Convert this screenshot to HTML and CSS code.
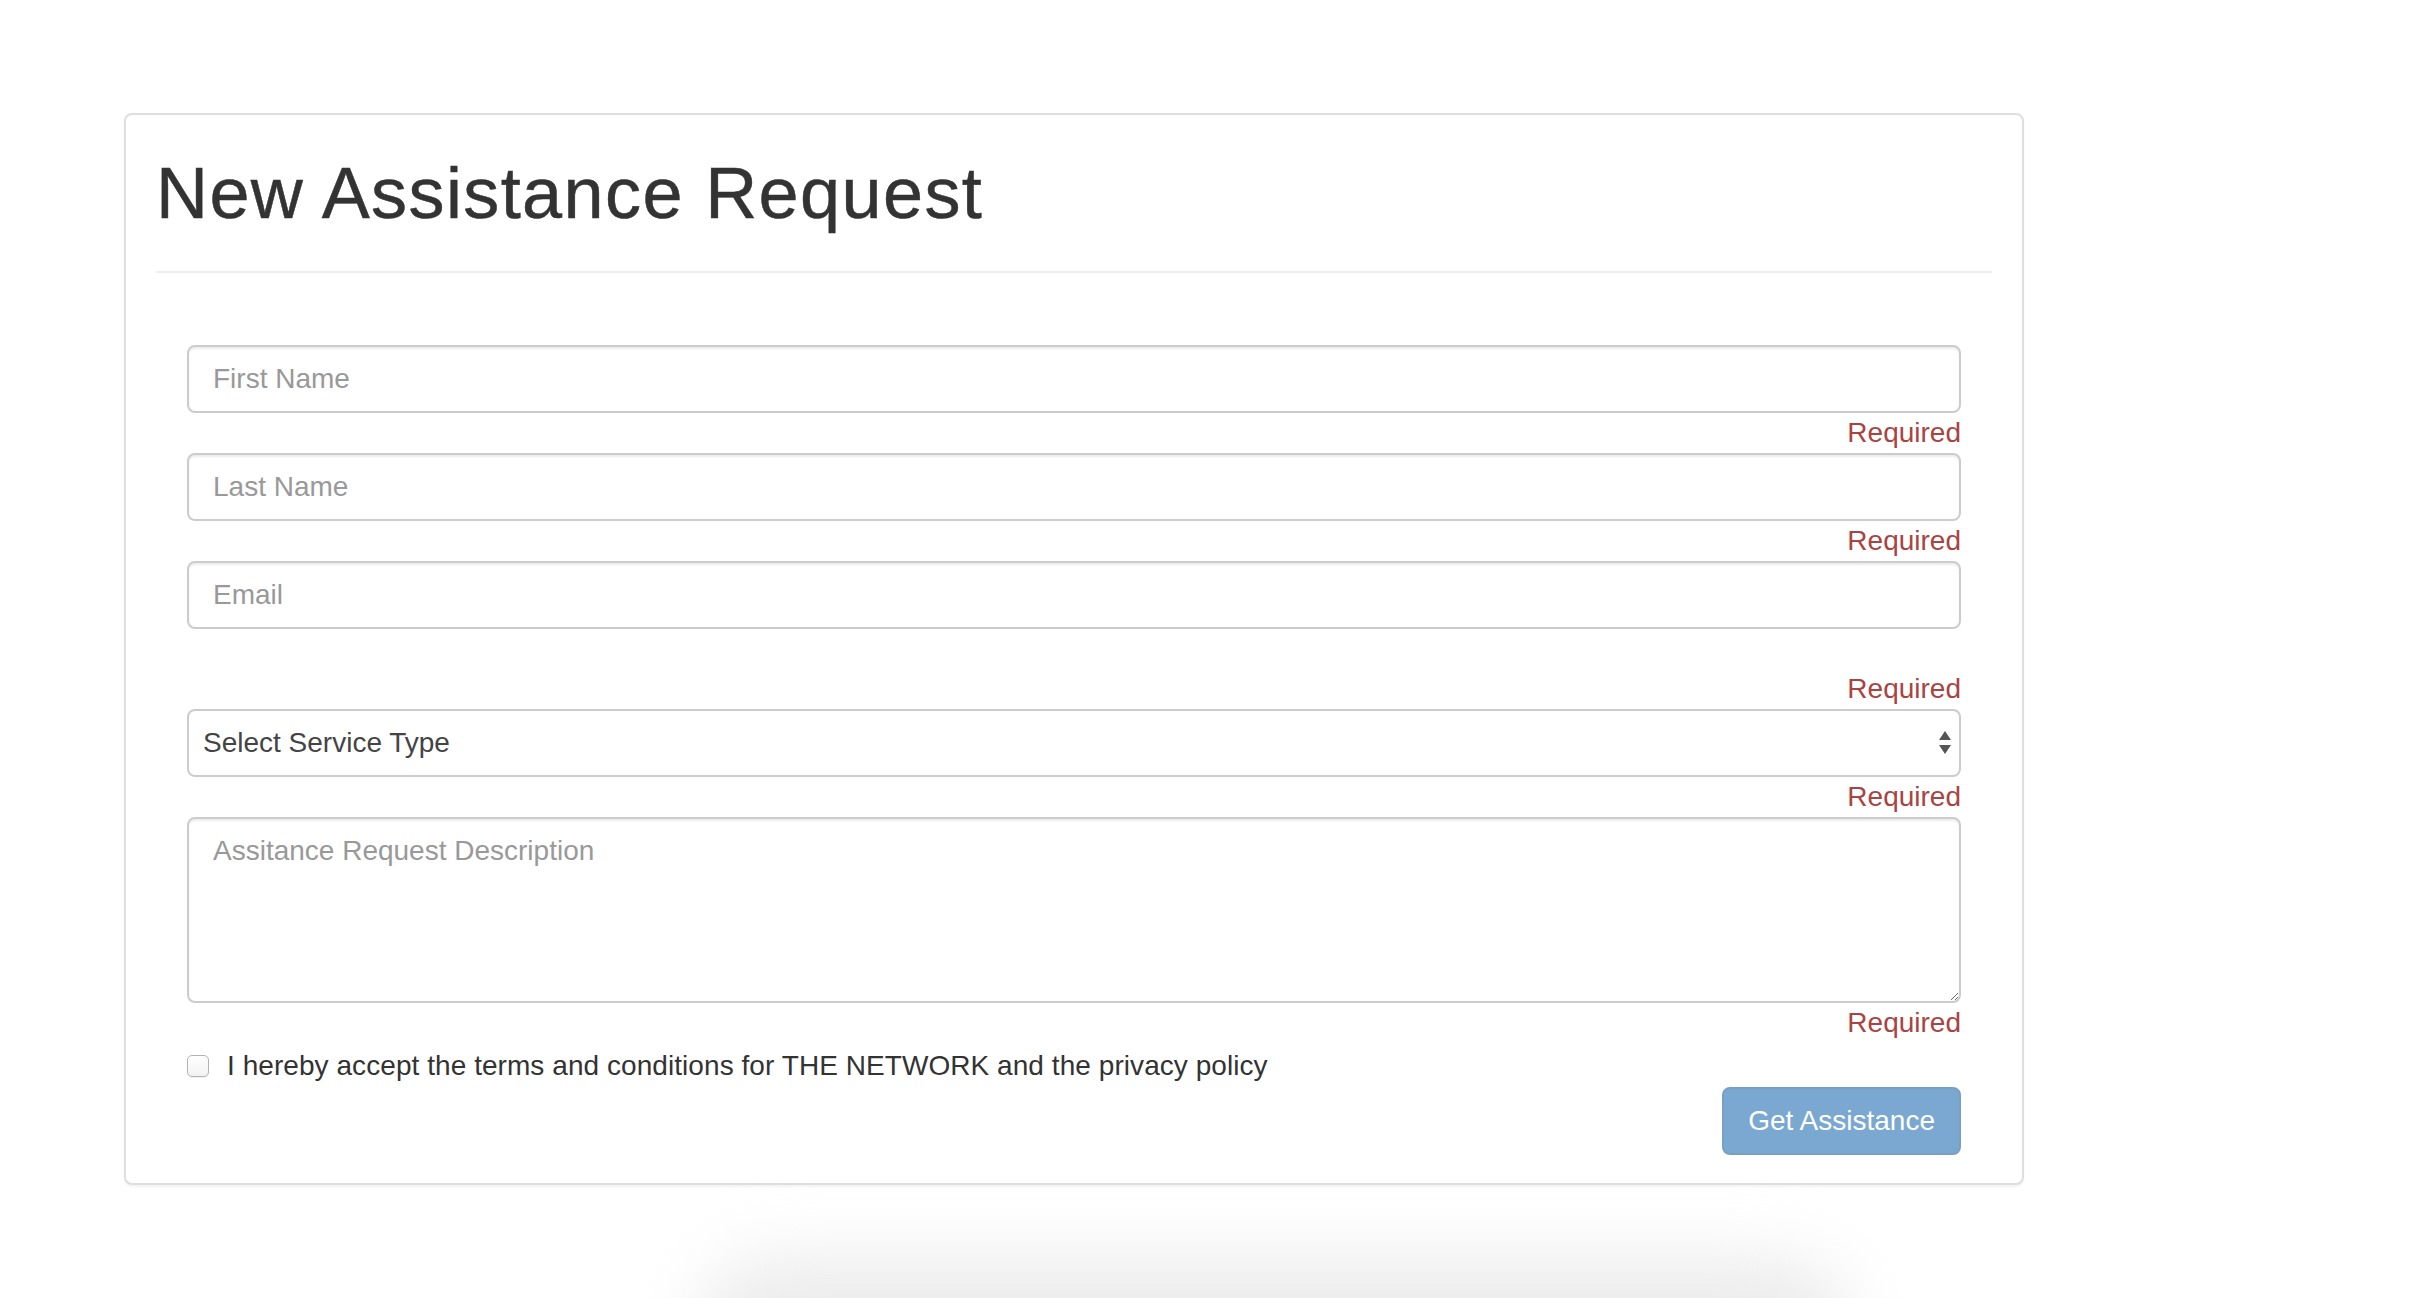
FILE: index.html
```html
<!DOCTYPE html>
<html lang="en">
<head>
<meta charset="utf-8">
<title>New Assistance Request</title>
<link rel="stylesheet" href="styles.css">
</head>
<body>
<div class="page">
  <div class="card">
    <div class="header">
      <h1 class="title">New Assistance Request</h1>
    </div>
    <form class="form">
      <div class="field">
        <input class="control" type="text" placeholder="First Name">
        <div class="error">Required</div>
      </div>
      <div class="field">
        <input class="control" type="text" placeholder="Last Name">
        <div class="error">Required</div>
      </div>
      <div class="field">
        <input class="control" type="email" placeholder="Email">
        <div class="error error-spaced">Required</div>
      </div>
      <div class="field">
        <div class="select-wrap">
          <select class="control select">
            <option>Select Service Type</option>
          </select>
          <svg class="select-arrows" width="14" height="26" viewBox="0 0 14 26" aria-hidden="true">
            <path d="M7 1 L13 10 L1 10 Z" fill="#555"/>
            <path d="M1 15 L13 15 L7 24 Z" fill="#555"/>
          </svg>
        </div>
        <div class="error">Required</div>
      </div>
      <div class="field">
        <textarea class="control textarea" placeholder="Assitance Request Description"></textarea>
        <div class="error">Required</div>
      </div>
      <label class="check-row">
        <input class="check" type="checkbox">
        <span class="check-label">I hereby accept the terms and conditions for THE NETWORK and the privacy policy</span>
      </label>
      <div class="actions">
        <button class="btn" type="button" disabled>Get Assistance</button>
      </div>
    </form>
  </div>
  <div class="bottom-shadow"></div>
</div>
</body>
</html>
```

FILE: styles.css
```css
html, body {
  margin: 0;
  padding: 0;
  background: #fff;
  overflow: hidden;
  height: 1298px;
}

body {
  font-family: "Liberation Sans", Arial, Helvetica, sans-serif;
  font-size: 28px;
  line-height: 40px;
  color: #333;
}

.page {
  height: 1298px;
  overflow: hidden;
  padding: 113px 0 0 124px;
  box-sizing: border-box;
}

.card {
  box-sizing: border-box;
  width: 1900px;
  border: 2px solid #dedede;
  border-radius: 8px;
  padding: 0 30px 28px;
  background: #fff;
  box-shadow: 0 2px 2px rgba(0, 0, 0, 0.05);
}

.header {
  padding-top: 39px;
  padding-bottom: 18px;
  border-bottom: 2px solid #eee;
}

.title {
  margin: 0 0 20px;
  font-size: 72px;
  line-height: 79.2px;
  font-weight: 500;
  color: #333;
  letter-spacing: 1.4px;
  -webkit-text-stroke: 0.5px #333;
}

.form {
  margin-top: 72px;
  padding: 0 31px;
}

.field {
  display: flex;
  flex-direction: column;
}

.control {
  box-sizing: border-box;
  display: block;
  width: 100%;
  height: 68px;
  margin: 0;
  padding: 0 24px;
  border: 2px solid #ccc;
  border-radius: 8px;
  background: #fff;
  font-family: inherit;
  font-size: 28px;
  line-height: 40px;
  color: #555;
  box-shadow: inset 0 2px 2px rgba(0, 0, 0, 0.075);
  outline: none;
}

.control::placeholder {
  color: #999;
  opacity: 1;
}

.select-wrap {
  position: relative;
}

.select {
  -webkit-appearance: none;
  appearance: none;
  padding: 0 40px 0 14px;
  color: #444;
  box-shadow: none;
  background: #fff;
}

.select-arrows {
  position: absolute;
  right: 9px;
  top: 21px;
}

.textarea {
  height: 186px;
  padding: 12px 24px;
  resize: vertical;
}

.error {
  text-align: right;
  color: #a94442;
  line-height: 40px;
}

.error-spaced {
  margin-top: 40px;
}

.check-row {
  display: flex;
  align-items: center;
  margin-top: 3px;
  height: 40px;
  color: #333;
}

.check-label {
  letter-spacing: 0.06px;
}

.check {
  -webkit-appearance: none;
  appearance: none;
  box-sizing: border-box;
  width: 22px;
  height: 22px;
  margin: 0 18px 0 0;
  border: 1.5px solid #b3b3b3;
  border-radius: 5px;
  background: linear-gradient(#ffffff, #f2f2f2);
  box-shadow: 0 1px 1px rgba(0, 0, 0, 0.06);
}

.actions {
  display: flex;
  justify-content: flex-end;
  margin-top: 1px;
}

.btn {
  box-sizing: border-box;
  height: 68px;
  padding: 0 24px;
  border: 2px solid #77a0c4;
  border-radius: 8px;
  background: #7aa8d0;
  color: #fff;
  font-family: inherit;
  font-size: 28px;
  line-height: 64px;
  cursor: not-allowed;
}

.bottom-shadow {
  width: 1160px;
  height: 160px;
  margin: 72px 0 0 570px;
  border-radius: 80px;
  background: #ececec;
  filter: blur(32px);
}
```
